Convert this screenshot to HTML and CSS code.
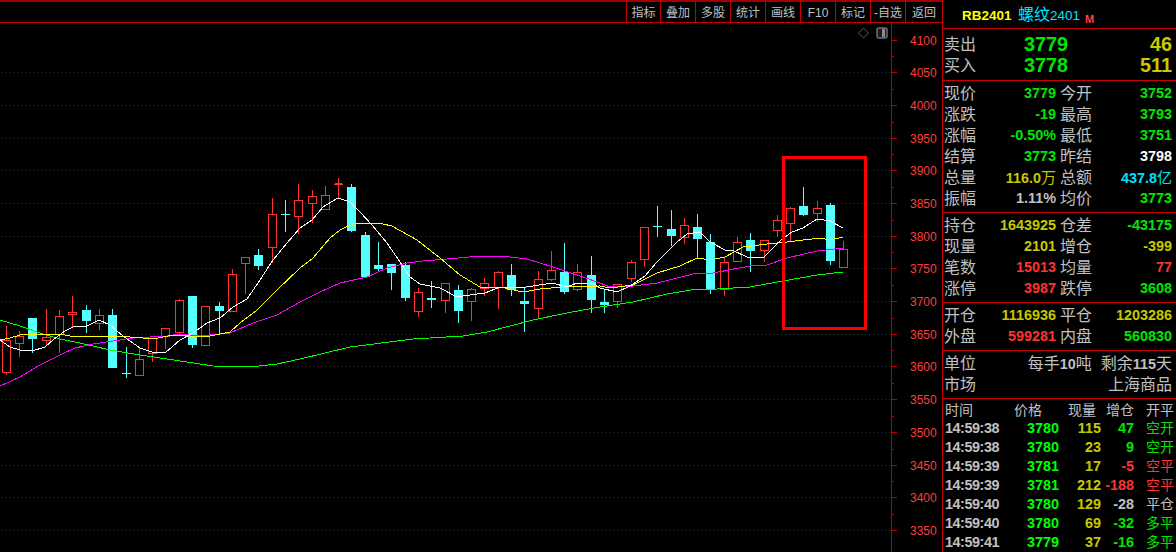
FILE: index.html
```html
<!DOCTYPE html>
<html lang="zh">
<head>
<meta charset="utf-8">
<title>RB2401 螺纹2401</title>
<link rel="stylesheet" href="styles.css">
</head>
<body>
<div class="app">
  <main class="main">
    <nav class="toolbar">
      <span class="tool">指标</span><span class="tool">叠加</span><span class="tool">多股</span><span class="tool">统计</span><span class="tool">画线</span><span class="tool">F10</span><span class="tool">标记</span><span class="tool">-自选</span><span class="tool">返回</span>
    </nav>
    <svg class="chart" viewBox="0 23 942 529" width="942" height="529" xmlns="http://www.w3.org/2000/svg">
      <path class="grid" d="M1 72.5H890M1 105.5H890M1 138.5H890M1 170.5H890M1 203.5H890M1 236.5H890M1 268.5H890M1 301.5H890M1 334.5H890M1 366.5H890M1 399.5H890M1 432.5H890M1 465.5H890M1 497.5H890M1 530.5H890"/>
      <path class="axis" d="M891.5 23V552M891 40.5h6M891 72.5h6M891 105.5h6M891 138.5h6M891 170.5h6M891 203.5h6M891 236.5h6M891 268.5h6M891 301.5h6M891 334.5h6M891 366.5h6M891 399.5h6M891 432.5h6M891 465.5h6M891 497.5h6M891 530.5h6M891 56.5h3M891 89.5h3M891 122.5h3M891 154.5h3M891 187.5h3M891 220.5h3M891 252.5h3M891 285.5h3M891 318.5h3M891 350.5h3M891 383.5h3M891 416.5h3M891 449.5h3M891 481.5h3M891 514.5h3"/>
      <g class="price">
        <text x="910" y="45">4100</text><text x="910" y="77">4050</text><text x="910" y="110">4000</text><text x="910" y="143">3950</text>
        <text x="910" y="175">3900</text><text x="910" y="208">3850</text><text x="910" y="241">3800</text><text x="910" y="273">3750</text>
        <text x="910" y="306">3700</text><text x="910" y="339">3650</text><text x="910" y="371">3600</text><text x="910" y="404">3550</text>
        <text x="910" y="437">3500</text><text x="910" y="470">3450</text><text x="910" y="502">3400</text><text x="910" y="535">3350</text>
      </g>
      <path class="wick-up" d="M6.5 326V375M19.5 331V357M46.5 309V346M59.5 310V353M72.5 296V327M99.5 309V330M139.5 348V375M152.5 338V362M165.5 328V349M179.5 299V334M205.5 306V346M232.5 269V311M245.5 257V294M272.5 198V263M298.5 184V234M312.5 190V223M325.5 186V209M338.5 178V198M334 184.5h9M335 183.5h7M418.5 288V317M445.5 283V313M471.5 288V321M484.5 278V296M498.5 271V309M538.5 271V319M551.5 251V281M577.5 264V291M617.5 284V308M631.5 260V282M644.5 227V267M684.5 218V244M724.5 257V296M737.5 237V261M764.5 240V262M777.5 215V237M790.5 207V241M817.5 201V222M843.5 241V268"/>
      <path class="body-up" d="M2.5 340.5h8v32h-8zM15.5 336.5h8v7h-8zM42.5 337.5h8v3h-8zM55.5 316.5h8v18h-8zM68.5 312.5h8v2h-8zM95.5 315.5h8v8h-8zM135.5 359.5h8v16h-8zM148.5 338.5h8v15h-8zM161.5 328.5h8v8h-8zM175.5 300.5h8v32h-8zM201.5 306.5h8v39h-8zM228.5 274.5h8v37h-8zM241.5 257.5h8v6h-8zM268.5 214.5h8v33h-8zM294.5 200.5h8v16h-8zM308.5 196.5h8v7h-8zM321.5 195.5h8v14h-8zM414.5 292.5h8v19h-8zM441.5 283.5h8v17h-8zM467.5 289.5h8v12h-8zM480.5 283.5h8v5h-8zM494.5 272.5h8v15h-8zM534.5 279.5h8v29h-8zM547.5 270.5h8v9h-8zM573.5 272.5h8v17h-8zM613.5 284.5h8v17h-8zM627.5 262.5h8v16h-8zM640.5 227.5h8v32h-8zM680.5 225.5h8v12h-8zM720.5 262.5h8v27h-8zM733.5 242.5h8v19h-8zM760.5 240.5h8v10h-8zM773.5 220.5h8v10h-8zM786.5 208.5h8v15h-8zM813.5 208.5h8v5h-8zM839.5 249.5h8v18h-8z"/>
      <path class="wick-down" d="M32.5 318V353M86.5 305V333M112.5 309V368M126.5 347V378M122 373.5h9M192.5 296V348M219.5 302V334M258.5 249V270M285.5 200V232M281 214.5h9M351.5 184V232M365.5 232V277M378.5 242V272M391.5 264V290M405.5 262V301M431.5 281V308M458.5 285V323M511.5 264V296M524.5 287V332M564.5 243V294M591.5 256V313M604.5 289V313M657.5 206V237M653 226.5h9M671.5 210V246M697.5 214V258M710.5 234V294M750.5 233V272M803.5 187V216M830.5 203V265"/>
      <path class="body-down" d="M28 318h9v21h-9zM82 310h9v11h-9zM108 315h9v53h-9zM188 296h9v49h-9zM215 306h9v5h-9zM254 255h9v11h-9zM347 187h9v44h-9zM361 235h9v42h-9zM374 265h9v4h-9zM387 264h9v9h-9zM401 265h9v33h-9zM427 298h9v2h-9zM454 290h9v21h-9zM507 275h9v15h-9zM520 301h9v3h-9zM560 272h9v20h-9zM587 275h9v25h-9zM600 302h9v3h-9zM667 229h9v7h-9zM693 227h9v12h-9zM706 242h9v47h-9zM746 240h9v11h-9zM799 206h9v9h-9zM826 205h9v56h-9z"/>
      <polyline class="ma ma60" points="0,320 20,326 40,333 60,339 80,343 110,350 140,355 167,359 187,362 213,366 250,367 277,364 300,359 350,347 413,339 463,336 487,332 533,320 567,313 600,307 633,302 667,294 697,289 717,289 750,287 783,281 817,275 843,272"/>
      <polyline class="ma ma20" points="0,386 20,377 40,365 60,355 75,348 93,344 113,341 133,338 167,336 180,334 200,336 230,333 253,323 277,315 300,302 320,292 340,283 367,277 387,268 407,263 423,261 447,259 480,256 502,256 527,259 553,267 583,277 600,283 610,287 633,286 657,283 697,273 713,273 750,266 767,265 787,258 817,251 843,248"/>
      <polyline class="ma ma10" points="0,340 10,338 20,335 40,334 60,334 70,336 93,336 107,336 130,337 143,338 158,338 173,335 190,336 210,336 230,332 240,323 257,310 277,290 300,268 313,258 330,238 340,230 355,223 383,224 392,226 417,240 440,258 460,275 480,287 500,287 523,292 540,289 563,287 600,286 610,288 633,285 657,273 680,266 697,258 710,260 725,257 743,247 767,244 787,242 820,238 830,240 843,237"/>
      <polyline class="ma ma5" points="0,340 10,347 20,350 32,351 45,347 53,340 65,331 73,327 87,326 99,320 110,325 123,336 140,348 152,352 165,353 180,340 193,333 207,323 220,318 233,307 247,299 258,283 273,260 287,243 300,228 312,220 323,207 338,198 350,202 360,212 372,225 387,243 400,262 410,277 420,284 440,288 457,297 470,295 485,293 500,287 520,288 533,286 552,283 567,287 577,283 593,283 600,288 617,292 630,286 645,276 657,262 677,242 687,234 700,232 710,242 725,250 732,250 747,257 764,257 780,241 792,232 803,228 817,219 830,221 843,228"/>
      <rect class="mark" x="783.5" y="157.5" width="82" height="171"/>
      <path class="icon-diamond" d="M863.5 28l5 5-5 5-5-5z"/>
      <rect class="icon-frame" x="877" y="28" width="10" height="10" rx="2"/>
      <rect class="icon-fill" x="882" y="29" width="3" height="8"/>
    </svg>
  </main>
  <aside class="panel">
    <header class="title">
      <b class="code">RB2401</b><span class="name">螺纹</span><b class="name-num">2401</b><b class="flag">M</b>
    </header>
    <section class="sec sec-quote">
      <div class="quote"><span class="lab">卖出</span><b class="big g">3779</b><b class="big y">46</b></div>
      <div class="quote"><span class="lab">买入</span><b class="big g">3778</b><b class="big y">511</b></div>
    </section>
    <section class="sec sec-stats">
      <div class="row"><span class="lab">现价</span><b class="g">3779</b><span class="lab lab2">今开</span><b class="g">3752</b></div>
      <div class="row"><span class="lab">涨跌</span><b class="g">-19</b><span class="lab lab2">最高</span><b class="g">3793</b></div>
      <div class="row"><span class="lab">涨幅</span><b class="g">-0.50%</b><span class="lab lab2">最低</span><b class="g">3751</b></div>
      <div class="row"><span class="lab">结算</span><b class="g">3773</b><span class="lab lab2">昨结</span><b class="w">3798</b></div>
      <div class="row"><span class="lab">总量</span><b class="y">116.0<span class="unit">万</span></b><span class="lab lab2">总额</span><b class="c">437.8<span class="unit">亿</span></b></div>
      <div class="row"><span class="lab">振幅</span><b class="s">1.11%</b><span class="lab lab2">均价</span><b class="g">3773</b></div>
    </section>
    <section class="sec sec-pos">
      <div class="row"><span class="lab">持仓</span><b class="y">1643925</b><span class="lab lab2">仓差</span><b class="g">-43175</b></div>
      <div class="row"><span class="lab">现量</span><b class="y">2101</b><span class="lab lab2">增仓</span><b class="y">-399</b></div>
      <div class="row"><span class="lab">笔数</span><b class="r">15013</b><span class="lab lab2">均量</span><b class="r">77</b></div>
      <div class="row"><span class="lab">涨停</span><b class="r">3987</b><span class="lab lab2">跌停</span><b class="g">3608</b></div>
    </section>
    <section class="sec sec-open">
      <div class="row"><span class="lab">开仓</span><b class="y">1116936</b><span class="lab lab2">平仓</span><b class="y">1203286</b></div>
      <div class="row"><span class="lab">外盘</span><b class="r">599281</b><span class="lab lab2">内盘</span><b class="g">560830</b></div>
    </section>
    <section class="sec sec-info">
      <div class="row-wide"><span class="lab">单位</span><span class="info">每手<b>10</b>吨</span><span class="info">剩余<b>115</b>天</span></div>
      <div class="row-wide"><span class="lab">市场</span><span class="info">上海商品</span></div>
    </section>
    <section class="trades">
      <div class="thead"><span class="th-time">时间</span><span class="th-price">价格</span><span class="th-vol">现量</span><span>增仓</span><span>开平</span></div>
      <div class="trade"><b class="t">14:59:38</b><b class="p">3780</b><b class="y">115</b><b class="g">47</b><span class="k g">空开</span></div>
      <div class="trade"><b class="t">14:59:38</b><b class="p">3780</b><b class="y">23</b><b class="g">9</b><span class="k g">空开</span></div>
      <div class="trade"><b class="t">14:59:39</b><b class="p">3781</b><b class="y">17</b><b class="r">-5</b><span class="k r">空平</span></div>
      <div class="trade"><b class="t">14:59:39</b><b class="p">3781</b><b class="y">212</b><b class="r">-188</b><span class="k r">空平</span></div>
      <div class="trade"><b class="t">14:59:40</b><b class="p">3780</b><b class="y">129</b><b class="s">-28</b><span class="k s">平仓</span></div>
      <div class="trade"><b class="t">14:59:40</b><b class="p">3780</b><b class="y">69</b><b class="g">-32</b><span class="k g">多平</span></div>
      <div class="trade"><b class="t">14:59:41</b><b class="p">3779</b><b class="y">37</b><b class="g">-16</b><span class="k g">多平</span></div>
    </section>
  </aside>
</div>
</body>
</html>
```
FILE: styles.css
```css
* { box-sizing: border-box; }
html, body { margin: 0; height: 100%; background: #000; overflow: hidden; }
body { font-family: "Liberation Sans", "Noto Sans CJK SC", sans-serif; color: #c0c0c0; }

.app { display: flex; width: 1176px; height: 552px; }

/* chart side */
.main { width: 942px; flex: none; display: flex; flex-direction: column; }
.toolbar {
  display: flex; justify-content: flex-end; height: 23px;
  border-top: 2px solid #a00000; border-bottom: 1px solid #c80000;
}
.tool {
  width: 35px; height: 20px; border-left: 1px solid #c80000; text-align: center;
  font-size: 12px; line-height: 22px; color: #c0c0c0;
}
.tool:first-child { width: 34px; }
.tool:last-child { width: 37px; }
.chart { display: block; flex: none; }

.grid { fill: none; stroke: #a00000; stroke-width: 1; stroke-dasharray: 1 3; shape-rendering: crispEdges; }
.axis { fill: none; stroke: #c00000; stroke-width: 1; shape-rendering: crispEdges; }
.price text { font: 12px "Liberation Sans", sans-serif; fill: #ff3c3c; }
.wick-up { fill: none; stroke: #ff3232; stroke-width: 1; shape-rendering: crispEdges; }
.body-up { fill: #000; stroke: #ff3232; stroke-width: 1; shape-rendering: crispEdges; }
.wick-down { fill: none; stroke: #54ffff; stroke-width: 1; shape-rendering: crispEdges; }
.body-down { fill: #54ffff; shape-rendering: crispEdges; }
.ma { fill: none; stroke-width: 1; shape-rendering: crispEdges; }
.ma5 { stroke: #ffffff; }
.ma10 { stroke: #ffff00; }
.ma20 { stroke: #ff00ff; }
.ma60 { stroke: #00ff00; }
.mark { fill: none; stroke: #ff0000; stroke-width: 3; shape-rendering: crispEdges; }
.icon-diamond { fill: none; stroke: #5c5c5c; stroke-width: 1; }
.icon-frame { fill: #1c1c1c; stroke: #707070; stroke-width: 1.5; }
.icon-fill { fill: #8c8c8c; }

/* quote panel */
.panel { width: 234px; flex: none; border-left: 1px solid #c80000; overflow: hidden; }
.title {
  height: 29px; border-bottom: 1px solid #c80000; padding: 5px 0 0 19px;
  display: flex; align-items: baseline; line-height: 20px;
}
.code { font-size: 13.5px; color: #ffff00; width: 56px; }
.name { font-size: 16px; line-height: 20px; color: #00e0ff; }
.name-num { font-size: 13.5px; font-weight: 400; color: #00e0ff; }
.flag { font-size: 11px; color: #ff4040; margin-left: 5px; position: relative; top: 3px; }

.sec { border-bottom: 1px solid #c80000; }
.sec-quote { height: 52px; padding-top: 5px; }
.sec-stats { height: 132px; padding-top: 2px; }
.sec-pos { height: 90px; padding-top: 2px; }
.sec-open { height: 48px; padding-top: 2px; }
.sec-info { height: 48px; padding-top: 2px; }

.row, .quote, .row-wide { height: 21px; line-height: 21px; padding-left: 1px; }
.row { display: grid; grid-template-columns: 32px 80px 36px 80px; grid-template-rows: 21px; font-size: 14.4px; text-align: right; }
.quote { display: grid; grid-template-columns: 32px 92px 104px; grid-template-rows: 21px; text-align: right; }
.row-wide { display: flex; justify-content: flex-end; padding-right: 4px; gap: 9px; }
.row-wide .lab { margin-right: auto; }

.lab { font-size: 16px; line-height: 22px; color: #c0c0c0; text-align: left; white-space: nowrap; }
.lab2 { margin-left: 4px; }
.big { font-size: 19.8px; }
.unit { font-weight: 400; font-size: 15px; }
.info { font-size: 16px; line-height: 22px; color: #c0c0c0; white-space: nowrap; }
.info b { font-size: 14.4px; }

.g { color: #00e600; }
.y { color: #c8c800; }
.r { color: #ff3232; }
.c { color: #00e0ff; }
.w { color: #ffffff; }
.s { color: #c0c0c0; }

/* trade ticks */
.thead, .trade {
  display: grid; grid-template-columns: 60px 54px 42px 33px 40px;
  padding-left: 2px; text-align: right; white-space: nowrap;
}
.thead { height: 20px; grid-template-rows: 20px; font-size: 14px; line-height: 22px; color: #c0c0c0; }
.th-time { text-align: left; }
.th-price { padding-right: 17px; }
.th-vol { padding-right: 5px; }
.trade { height: 19px; grid-template-rows: 19px; line-height: 19px; font-size: 14.4px; }
.t { text-align: left; letter-spacing: -0.45px; color: #c0c0c0; }
.p { color: #00ff00; }
.k { font-size: 14px; line-height: 19px; }
```
